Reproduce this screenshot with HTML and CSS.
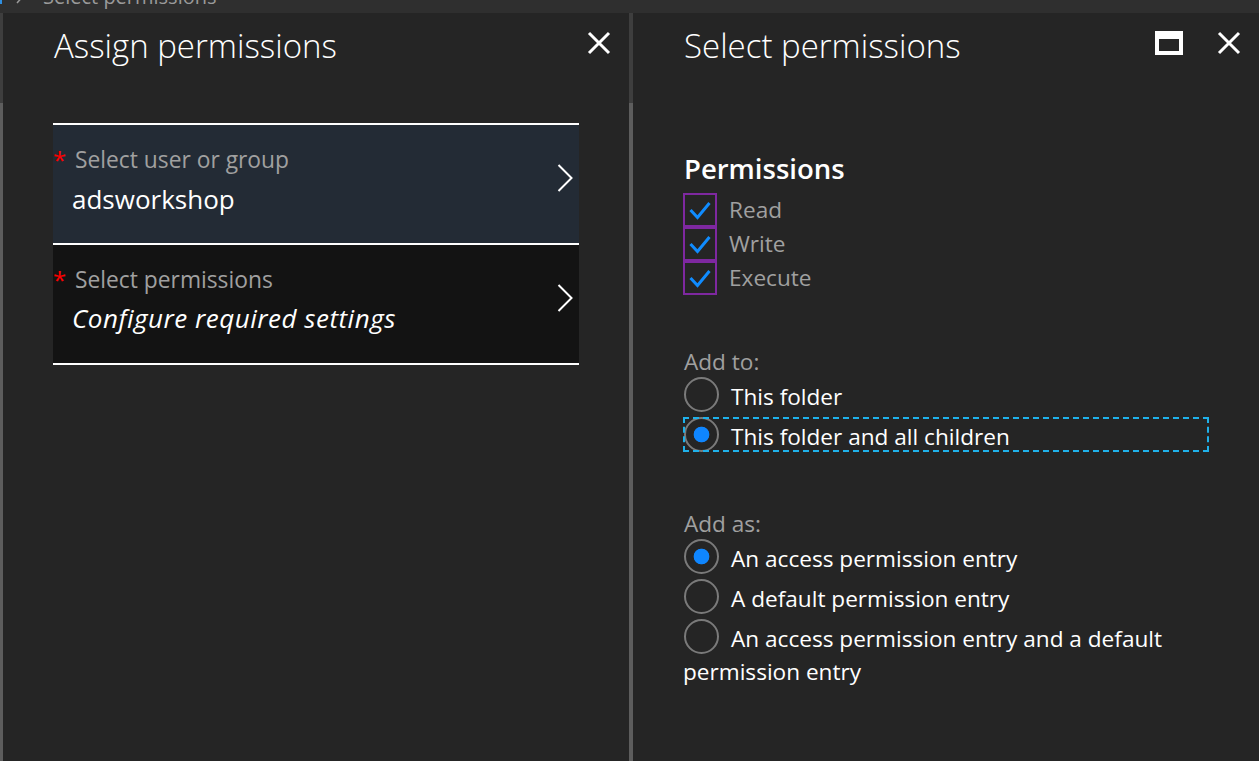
FILE: index.html
```html
<!DOCTYPE html>
<html lang="en">
<head>
<meta charset="utf-8">
<title>Select permissions</title>
<link rel="stylesheet" href="styles.css">
</head>
<body>
<div class="topbar">
  <div class="crumbs">
    <span class="crumb-mark"></span>
    <svg class="crumb-chev" width="10" height="20" viewBox="0 0 10 20"><polyline points="1,1 9,10 1,19" fill="none" stroke="#9a9a9a" stroke-width="1.5"/></svg>
    <span class="crumb-text">Select permissions</span>
  </div>
</div>
<div class="main">
  <div class="strip edge"></div>
  <section class="blade">
    <header class="blade-head">
      <h1 class="blade-title">Assign permissions</h1>
      <div class="blade-actions">
        <svg class="icon-close" width="24" height="24" viewBox="0 0 24 24"><path d="M2 2 L22 22 M22 2 L2 22" stroke="#fff" stroke-width="3" fill="none"/></svg>
      </div>
    </header>
    <div class="cards">
      <div class="card card-sel">
        <div class="card-text">
          <div class="card-label"><span class="req">*</span><span>Select user or group</span></div>
          <div class="card-value">adsworkshop</div>
        </div>
        <svg class="chev" width="16" height="28" viewBox="0 0 16 28"><polyline points="1.5,1 14.5,14 1.5,27" fill="none" stroke="#fff" stroke-width="2"/></svg>
      </div>
      <div class="card card-plain">
        <div class="card-text">
          <div class="card-label"><span class="req">*</span><span>Select permissions</span></div>
          <div class="card-value italic">Configure required settings</div>
        </div>
        <svg class="chev" width="16" height="28" viewBox="0 0 16 28"><polyline points="1.5,1 14.5,14 1.5,27" fill="none" stroke="#fff" stroke-width="2"/></svg>
      </div>
    </div>
  </section>
  <div class="strip divider"></div>
  <section class="blade">
    <header class="blade-head">
      <h1 class="blade-title">Select permissions</h1>
      <div class="blade-actions">
        <span class="icon-max"></span>
        <svg class="icon-close" width="24" height="24" viewBox="0 0 24 24"><path d="M2 2 L22 22 M22 2 L2 22" stroke="#fff" stroke-width="3" fill="none"/></svg>
      </div>
    </header>
    <div class="content">
      <h2 class="section-title">Permissions</h2>
      <div class="checks">
        <div class="check-row">
          <span class="box"><svg width="30" height="30" viewBox="0 0 30 30"><polyline points="5.5,15 12.5,22.5 24.5,8" fill="none" stroke="#108cff" stroke-width="3"/></svg></span>
          <span class="check-label">Read</span>
        </div>
        <div class="check-row">
          <span class="box"><svg width="30" height="30" viewBox="0 0 30 30"><polyline points="5.5,15 12.5,22.5 24.5,8" fill="none" stroke="#108cff" stroke-width="3"/></svg></span>
          <span class="check-label">Write</span>
        </div>
        <div class="check-row">
          <span class="box"><svg width="30" height="30" viewBox="0 0 30 30"><polyline points="5.5,15 12.5,22.5 24.5,8" fill="none" stroke="#108cff" stroke-width="3"/></svg></span>
          <span class="check-label">Execute</span>
        </div>
      </div>

      <div class="group-label add-to">Add to:</div>
      <div class="radios">
        <div class="radio"><span class="radio-circle"></span>This folder</div>
        <div class="radio focus"><span class="radio-circle on"></span>This folder and all children</div>
      </div>

      <div class="group-label add-as">Add as:</div>
      <div class="radios">
        <div class="radio"><span class="radio-circle on"></span>An access permission entry</div>
        <div class="radio"><span class="radio-circle"></span>A default permission entry</div>
        <div class="radio"><span class="radio-circle"></span>An access permission entry and a default permission entry</div>
      </div>
    </div>
  </section>
</div>
</body>
</html>
```
FILE: styles.css
```css
html, body {
  margin: 0;
  padding: 0;
}
body {
  width: 1259px;
  height: 761px;
  overflow: hidden;
  background: #252525;
  color: #fff;
  font-family: "Open Sans", "Noto Sans", sans-serif;
}

/* breadcrumb strip */
.topbar {
  height: 13px;
  background: #2f2f2f;
  overflow: hidden;
}
.crumbs {
  display: flex;
  align-items: flex-start;
  height: 20px;
  margin-top: -13px;
}
.crumb-mark {
  flex: none;
  width: 2px;
  height: 4px;
  margin-top: 13px;
  background: #2f8fe0;
}
.crumb-chev {
  flex: none;
  margin-left: 14px;
  margin-top: -3px;
}
.crumb-text {
  margin-left: 17px;
  font-size: 20px;
  line-height: 20px;
  color: #9a9a9a;
}

/* blades */
.main {
  display: flex;
  height: 748px;
}
.strip {
  flex: none;
  background: linear-gradient(#3e3e3e 0, #3e3e3e 90px, #5d5d5d 90px);
}
.strip.edge { width: 3px; }
.strip.divider { width: 4px; }

.blade {
  flex: none;
  width: 626px;
  box-sizing: border-box;
  padding: 13px 18px 0 50px;
}
.blade-head {
  display: flex;
  align-items: flex-start;
  height: 40px;
}
.blade-title {
  margin: 0 auto 0 1px;
  font-size: 33px;
  font-weight: 300;
  line-height: 40px;
  color: #fff;
}
.blade-actions {
  display: flex;
  align-items: flex-start;
  gap: 34px;
  margin-top: 5px;
}
.icon-close { display: block; }
.icon-max {
  display: block;
  width: 28px;
  height: 24px;
  box-sizing: border-box;
  border: 4px solid #fff;
  border-top-width: 8px;
}

/* left blade cards */
.cards {
  margin-top: 57px;
  width: 526px;
}
.card {
  display: flex;
  align-items: flex-start;
  height: 96px;
  padding: 22px 6px 0 0;
  border-top: 2px solid #fff;
}
.card:last-child { border-bottom: 2px solid #fff; }
.card-sel { background: #232b35; }
.card-plain { background: #131313; }
.card-text { flex: 1; }
.card-label {
  display: flex;
  font-size: 22.8px;
  line-height: 26px;
  color: #a0a0a0;
}
.req {
  flex: none;
  width: 22px;
  font-size: 24px;
  color: #f00;
}
.card-value {
  margin: 11px 0 0 19px;
  font-size: 26px;
  line-height: 30px;
  color: #fff;
}
.card-value.italic {
  font-style: italic;
  letter-spacing: 0.5px;
  margin-top: 10px;
}
.chev {
  flex: none;
  display: block;
  margin-top: 17px;
}

/* right blade content */
.content { width: 526px; }
.section-title {
  margin: 87px 0 8px 1px;
  font-size: 27.5px;
  font-weight: 600;
  line-height: 32px;
  color: #fff;
}
.check-row {
  display: flex;
  align-items: center;
  height: 34px;
}
.box {
  flex: none;
  display: flex;
  width: 34px;
  height: 34px;
  box-sizing: border-box;
  border: 2px solid #7e28a0;
}
.box svg { display: block; }
.check-label {
  margin-left: 12px;
  font-size: 22.6px;
  line-height: 26px;
  color: #a0a0a0;
}
.group-label {
  margin-left: 1px;
  font-size: 22.6px;
  line-height: 26px;
  color: #a0a0a0;
}
.add-to { margin-top: 53.5px; }
.add-as { margin-top: 58.8px; }
.radios {
  display: flex;
  flex-direction: column;
  gap: 4.6px;
  margin-top: 2px;
}
.radio {
  font-size: 22.6px;
  line-height: 33px;
  color: #fff;
}
.radio.focus {
  outline: 2px dashed #1fb1ea;
  outline-offset: -2px;
}
.radio-circle {
  display: inline-block;
  width: 35px;
  height: 35px;
  box-sizing: border-box;
  border: 2px solid #7a7a7a;
  border-radius: 50%;
  vertical-align: -7.5px;
  margin: 0 12px 0 1px;
}
.radio-circle.on {
  background: radial-gradient(circle, #0f86ff 0, #0f86ff 7.5px, transparent 8.2px);
}
```
